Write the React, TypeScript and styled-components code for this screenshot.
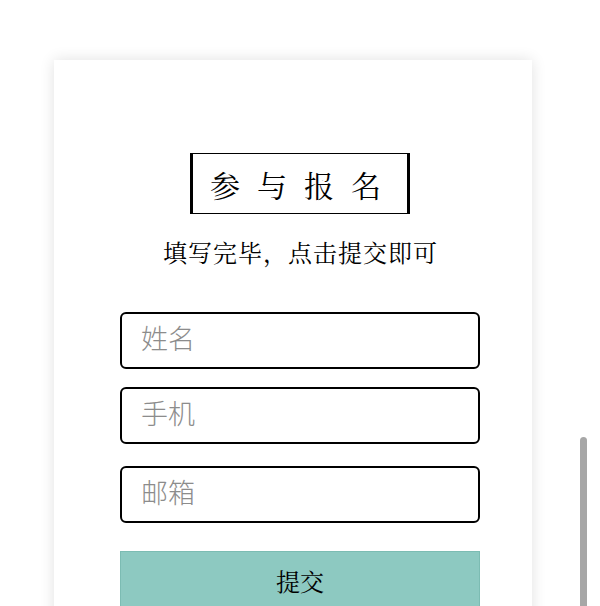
import React from 'react'
import styled, { createGlobalStyle } from 'styled-components'

const GlobalStyle = createGlobalStyle`
  html, body {
    margin: 0;
    padding: 0;
    background: #ffffff;
    font-family: "Liberation Serif", "Noto Serif CJK SC", "Noto Sans CJK SC", serif;
  }
`

const Page = styled.div`
  padding-top: 60px;
  padding-left: 54px;
`

const Card = styled.div`
  width: 478px;
  min-height: 600px;
  box-sizing: border-box;
  background: #fff;
  box-shadow: 0 0 14px rgba(0, 0, 0, 0.12);
  padding: 93px 52px 40px 66px;
`

const Header = styled.div`
  display: flex;
  flex-direction: column;
  align-items: center;
`

const TitleBox = styled.h2`
  margin: 0;
  padding: 0 9px 0 17px;
  height: 59px;
  display: flex;
  align-items: center;
  border-top: 1px solid #000;
  border-bottom: 1px solid #000;
  border-left: 3px solid #000;
  border-right: 3px solid #000;
  font-size: 30px;
  font-weight: normal;
  letter-spacing: 17px;
  color: #000;
`

const Subtitle = styled.p`
  margin: 27px 0 0;
  padding-left: 1px;
  font-size: 24px;
  line-height: 26px;
  letter-spacing: 1px;
  color: #000;
`

const Form = styled.form`
  display: flex;
  flex-direction: column;
  margin-top: 45px;
`

const Field = styled.input<{ $gap: number }>`
  box-sizing: border-box;
  width: 360px;
  height: 57px;
  margin-bottom: ${p => p.$gap}px;
  padding: 0 19px;
  border: 2px solid #000;
  border-radius: 6px;
  font-family: "Liberation Sans", "Noto Sans CJK SC", sans-serif;
  font-size: 27px;
  font-weight: 300;
  color: #333;
  background: #fff;
  outline: none;

  &::placeholder {
    color: #8c8c8c;
  }
`

const Submit = styled.button`
  box-sizing: border-box;
  width: 360px;
  height: 58px;
  margin-top: 5px;
  border: 1px solid #7cbcb3;
  background: #8dc9c1;
  font-family: inherit;
  font-size: 24px;
  color: #000;
  cursor: pointer;
`

const ScrollThumb = styled.div`
  position: fixed;
  top: 437px;
  right: 13px;
  width: 7px;
  height: 190px;
  border-radius: 4px;
  background: #a7a7a7;
`

export default function App() {
  return (
    <>
      <GlobalStyle />
      <Page>
        <Card>
          <Header>
            <TitleBox>参与报名</TitleBox>
            <Subtitle>填写完毕，点击提交即可</Subtitle>
          </Header>
          <Form onSubmit={e => e.preventDefault()}>
            <Field $gap={18} placeholder="姓名" />
            <Field $gap={22} placeholder="手机" />
            <Field $gap={23} placeholder="邮箱" />
            <Submit type="submit">提交</Submit>
          </Form>
        </Card>
      </Page>
      <ScrollThumb />
    </>
  )
}
